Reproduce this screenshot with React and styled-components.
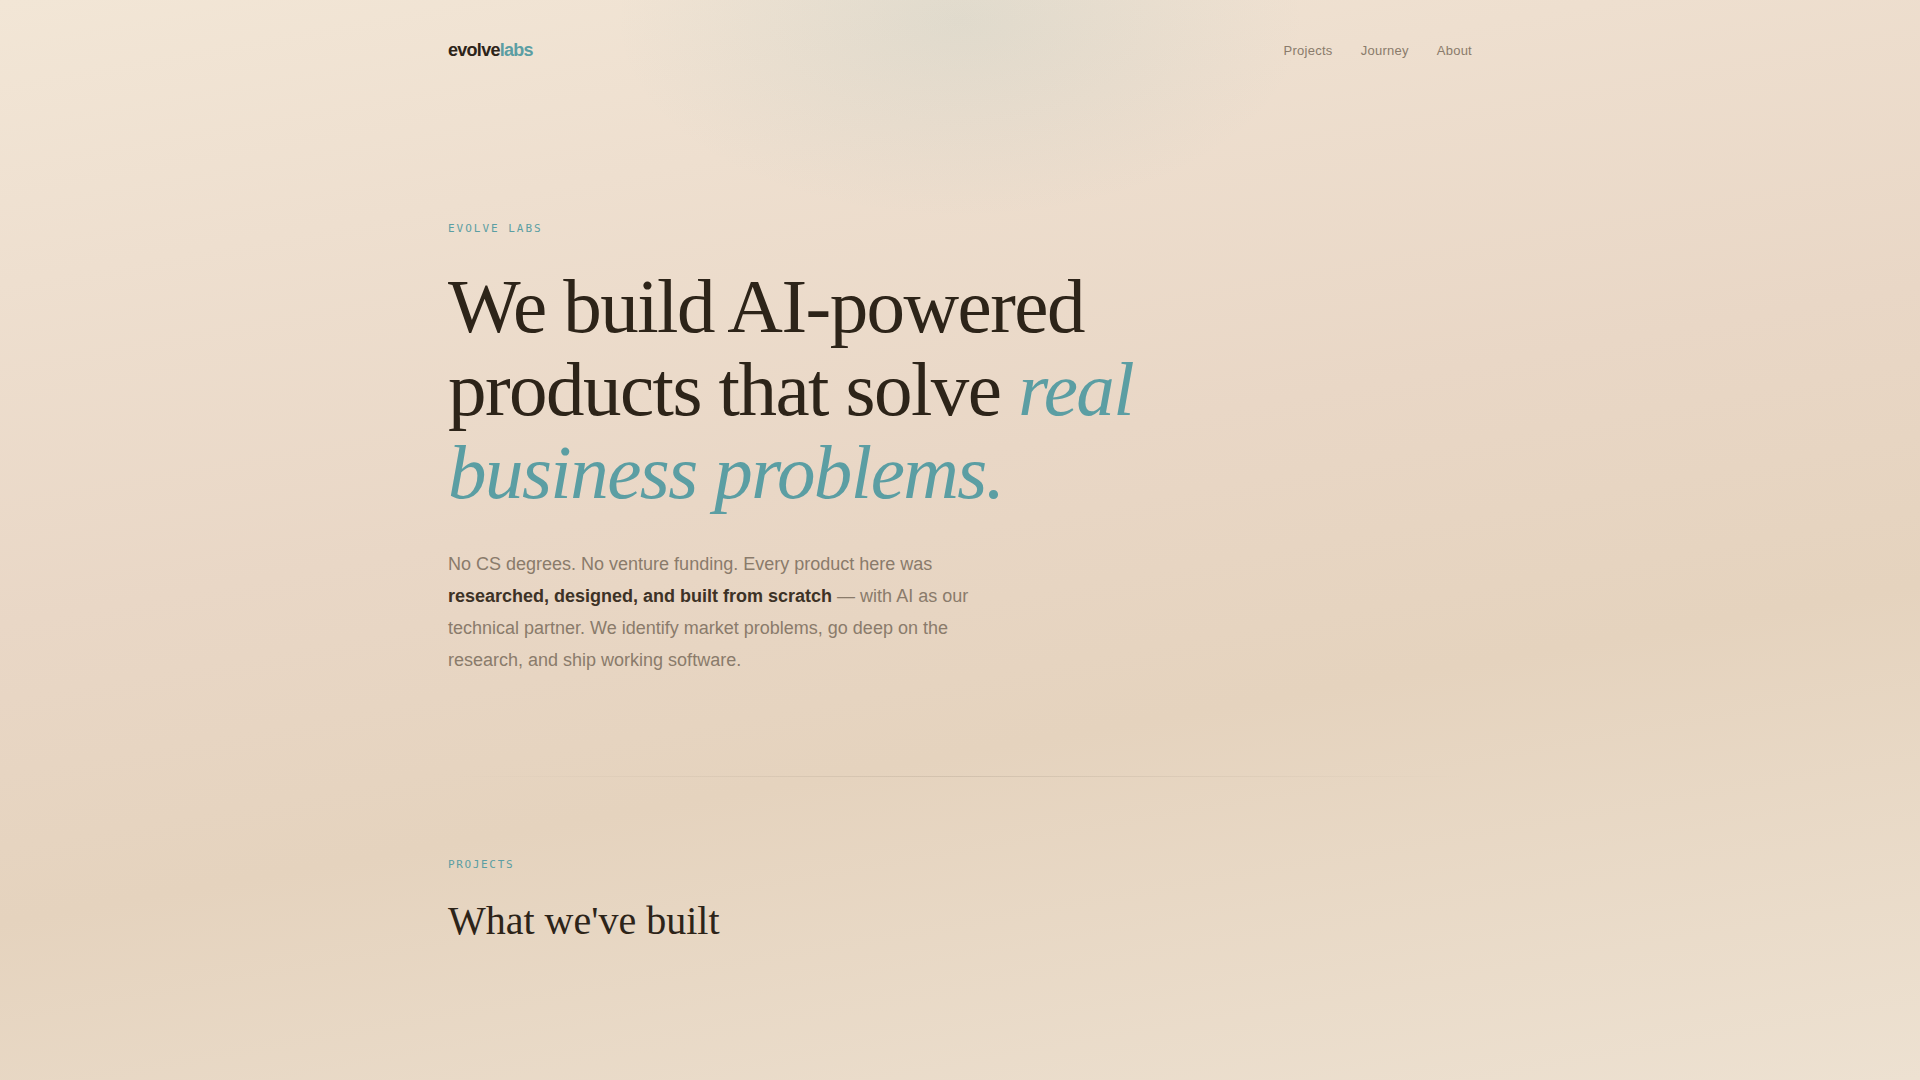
import React from "react";
import styled, { createGlobalStyle } from "styled-components";

const ink = "#2d2419";
const inkSoft = "#3d3226";
const muted = "#8a7b6b";
const teal = "#5b9ea3";

const GlobalStyle = createGlobalStyle`
  * {
    box-sizing: border-box;
  }

  body {
    margin: 0;
    color: ${ink};
    font-family: "Liberation Sans", Arial, sans-serif;
  }
`;

const Page = styled.div`
  position: relative;
  min-height: 100vh;
  overflow: hidden;
  background: linear-gradient(
    170deg,
    #f2e6d6 0%,
    #eedfcf 20%,
    #e9d7c6 44%,
    #e5d3be 65%,
    #ede1d1 100%
  );
`;

const Glow = styled.div`
  position: absolute;
  top: -180px;
  left: 50%;
  width: 700px;
  height: 400px;
  margin-left: -350px;
  background: radial-gradient(
    ellipse,
    rgba(91, 158, 163, 0.1) 0%,
    transparent 70%
  );
  pointer-events: none;
`;

const Container = styled.div`
  position: relative;
  max-width: 1120px;
  margin: 0 auto;
  padding: 0 48px;
`;

const Nav = styled.nav`
  display: flex;
  align-items: center;
  justify-content: space-between;
  padding: 40px 0;
`;

const Logo = styled.a`
  color: ${ink};
  font-size: 18px;
  font-weight: 700;
  line-height: 21px;
  letter-spacing: -0.04em;
  text-decoration: none;

  span {
    color: ${teal};
  }
`;

const NavLinks = styled.div`
  display: flex;
  gap: 28px;
`;

const NavLink = styled.a`
  color: ${muted};
  font-size: 13px;
  line-height: 21px;
  letter-spacing: 0.02em;
  text-decoration: none;
`;

const Hero = styled.header`
  padding: 120px 0 100px;
`;

const Label = styled.p`
  margin: 0;
  color: ${teal};
  font-family: "DejaVu Sans Mono", monospace;
  font-size: 11px;
  line-height: 16px;
  letter-spacing: ${props => (props.$wide ? "0.18em" : "0.15em")};
  text-transform: uppercase;
`;

const Title = styled.h1`
  max-width: 800px;
  margin: 28px 0 34px;
  font-family: "Liberation Serif", "Times New Roman", serif;
  font-size: 77px;
  font-weight: 400;
  line-height: 83px;
  letter-spacing: -0.02em;

  em {
    color: ${teal};
  }
`;

const Intro = styled.p`
  max-width: 560px;
  margin: 0;
  color: ${muted};
  font-size: 18px;
  line-height: 32px;

  strong {
    color: ${inkSoft};
  }
`;

const Divider = styled.hr`
  height: 1px;
  margin: 0;
  border: 0;
  background: linear-gradient(
    90deg,
    transparent,
    rgba(44, 36, 25, 0.1),
    transparent
  );
`;

const Section = styled.section`
  padding: 80px 0 120px;
`;

const SectionTitle = styled.h2`
  margin: 24px 0 0;
  font-family: "Liberation Serif", "Times New Roman", serif;
  font-size: 40px;
  font-weight: 400;
  line-height: 48px;
`;

const links = ["Projects", "Journey", "About"];

const App = () => {
  return (
    <Page>
      <GlobalStyle />
      <Glow />
      <Container>
        <Nav>
          <Logo href="#">
            evolve<span>labs</span>
          </Logo>
          <NavLinks>
            {links.map(link => (
              <NavLink key={link} href={`#${link.toLowerCase()}`}>
                {link}
              </NavLink>
            ))}
          </NavLinks>
        </Nav>

        <Hero>
          <Label $wide>Evolve Labs</Label>
          <Title>
            We build AI-powered products that solve{" "}
            <em>real business problems.</em>
          </Title>
          <Intro>
            No CS degrees. No venture funding. Every product here was{" "}
            <strong>researched, designed, and built from scratch</strong> — with
            AI as our technical partner. We identify market problems, go deep on
            the research, and ship working software.
          </Intro>
        </Hero>

        <Divider />

        <Section id="projects">
          <Label>Projects</Label>
          <SectionTitle>What we've built</SectionTitle>
        </Section>
      </Container>
    </Page>
  );
};

export default App;
